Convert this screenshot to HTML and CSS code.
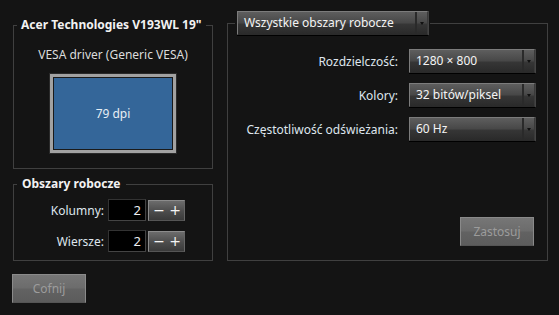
FILE: index.html
```html
<!DOCTYPE html>
<html lang="pl">
<head>
<meta charset="utf-8">
<link rel="stylesheet" href="styles.css">
</head>
<body>
<div class="app">
  <div class="left">
    <fieldset class="group monitor-group">
      <legend class="title">Acer Technologies V193WL 19"</legend>
      <div class="driver">VESA driver (Generic VESA)</div>
      <div class="monitor"><div class="screen">79 dpi</div></div>
    </fieldset>
    <fieldset class="group ws-group">
      <legend class="title">Obszary robocze</legend>
      <div class="spin-row">
        <span class="label">Kolumny:</span>
        <span class="num">2</span>
        <span class="spin"><span>−</span><span>+</span></span>
      </div>
      <div class="spin-row">
        <span class="label">Wiersze:</span>
        <span class="num">2</span>
        <span class="spin"><span>−</span><span>+</span></span>
      </div>
    </fieldset>
    <button class="btn undo" disabled>Cofnij</button>
  </div>
  <fieldset class="group settings">
    <legend class="combo-legend"><span class="combo wide"><span class="combo-text">Wszystkie obszary robocze</span><span class="arrow"></span></span></legend>
    <div class="settings-body">
      <div class="form">
        <span class="label">Rozdzielczość:</span>
        <span class="combo"><span class="combo-text">1280 × 800</span><span class="arrow"></span></span>
        <span class="label">Kolory:</span>
        <span class="combo"><span class="combo-text">32 bitów/piksel</span><span class="arrow"></span></span>
        <span class="label">Częstotliwość odświeżania:</span>
        <span class="combo"><span class="combo-text">60 Hz</span><span class="arrow"></span></span>
      </div>
      <button class="btn apply" disabled>Zastosuj</button>
    </div>
  </fieldset>
</div>
</body>
</html>
```
FILE: styles.css
```css
* { box-sizing: border-box; }
html, body { margin: 0; padding: 0; }
body {
  background: #141414;
  color: #e4e4e4;
  font-family: "Noto Sans", "Open Sans", sans-serif;
  font-size: 12px;
  width: 559px;
  height: 315px;
  overflow: hidden;
}
.app {
  display: grid;
  grid-template-columns: 200px 321px;
  column-gap: 14px;
  align-items: start;
  padding: 11px 0 0 13px;
}
.left {
  display: flex;
  flex-direction: column;
  margin-top: 6px;
}
.group {
  margin: 0;
  border: 1px solid #404040;
  min-width: 0;
}
.title {
  font-weight: bold;
  color: #f2f2f2;
  line-height: 16px;
  padding: 0 4px;
  font-size: 12px;
}
.monitor-group {
  padding: 14px 3px 14px 3px;
  display: flex;
  flex-direction: column;
  align-items: center;
}
.driver {
  line-height: 16px;
  color: #dcdcdc;
}
.monitor {
  margin-top: 10px;
  width: 128px;
  height: 81px;
  background: #a2a2a2;
  padding: 3px;
  border: 1px solid #2a2a2a;
}
.screen {
  height: 100%;
  background: #346699;
  border: 1px solid #1a1a1a;
  display: flex;
  align-items: center;
  justify-content: center;
  color: #e8eef4;
  font-size: 12px;
}
.ws-group {
  margin-top: 7px;
  padding: 7px 27px 8px 3px;
  display: flex;
  flex-direction: column;
  gap: 9px;
}
.ws-group .title { padding: 0 5px; }
.spin-row {
  display: flex;
  justify-content: flex-end;
  align-items: center;
  height: 22px;
}
.label { color: #dfe6ee; }
.spin-row .label { margin-right: 4px; }
.num {
  width: 38px;
  height: 22px;
  background: #000;
  border: 1px solid #333;
  border-right-color: #444;
  border-bottom-color: #444;
  text-align: right;
  padding-right: 4px;
  line-height: 20px;
  font-size: 13px;
  color: #eee;
}
.spin {
  margin-left: 2px;
  width: 37px;
  height: 21px;
  border: 1px solid #8c8c8c;
  border-bottom-color: #555;
  border-right-color: #666;
  background: linear-gradient(#6c6c6c, #4c4c4c 55%, #3a3a3a);
  display: flex;
  justify-content: space-around;
  align-items: center;
  color: #f4f4f4;
  font-family: "DejaVu Sans", sans-serif;
  font-size: 14px;
  line-height: 14px;
  padding: 0 1px 1px 2px;
}
.btn {
  font-family: inherit;
  font-size: 12px;
  color: #9c9c9c;
  border: 1px solid #8a8a8a;
  border-bottom-color: #555;
  background: linear-gradient(#767676, #6c6c6c 48%, #626262 52%, #5c5c5c);
  padding: 0;
  height: 29px;
  width: 74px;
}
.undo {
  margin-top: 13px;
  margin-left: -1px;
}
.settings {
  padding: 14px 12px 14px 7px;
}
.combo-legend {
  padding: 0 2px;
}
.combo {
  display: flex;
  height: 24px;
  border: 1px solid #7c7c7c;
  border-bottom-color: #2a2a2a;
  border-right-color: #3a3a3a;
  background: linear-gradient(#5e5e5e, #474747 50%, #363636 55%, #2a2a2a);
  color: #f4f4f4;
  box-shadow: 0 1px 0 #000, 1px 0 0 #444;
}
.combo-text {
  flex: 1;
  padding-left: 6px;
  line-height: 22px;
  white-space: nowrap;
  font-size: 12px;
}
.arrow {
  width: 12px;
  border-left: 2px solid #2a2a2a;
  position: relative;
}
.arrow::after {
  content: "";
  position: absolute;
  left: 3px;
  top: 10px;
  border-left: 2px solid transparent;
  border-right: 2px solid transparent;
  border-top: 3px solid #111;
}
.combo.wide { width: 191px; }
.settings-body {
  height: 197px;
  display: flex;
  flex-direction: column;
  align-items: flex-end;
}
.form {
  display: grid;
  grid-template-columns: auto 126px;
  column-gap: 11px;
  row-gap: 10px;
  align-items: center;
  justify-items: end;
}
.form .combo { width: 126px; }
.apply {
  margin-top: auto;
  margin-right: 1px;
  width: 74px;
}
```
